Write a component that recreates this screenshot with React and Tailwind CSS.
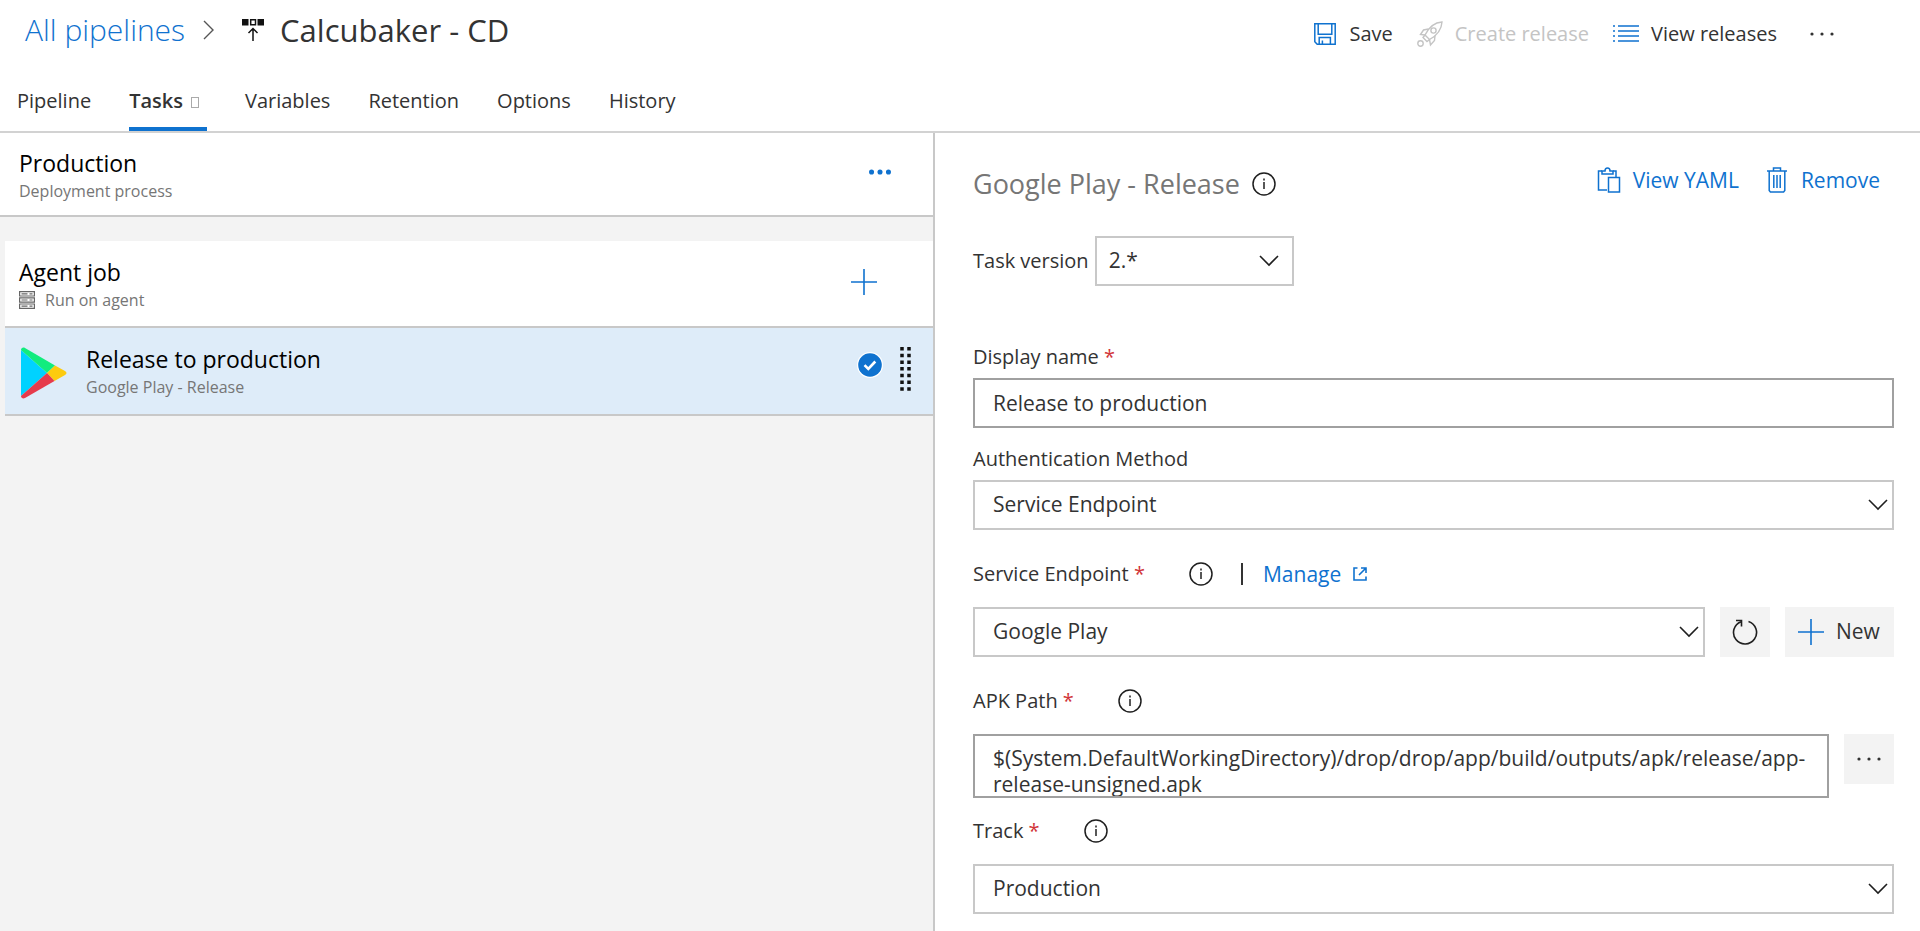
import React, { useState } from "react";

const tabs = ["Pipeline", "Tasks", "Variables", "Retention", "Options", "History"];

function InfoIcon() {
  return (
    <svg className="size-6 shrink-0" viewBox="0 0 24 24" fill="none" stroke="#1f1f1f" strokeWidth="1.5">
      <circle cx="12" cy="12" r="11" />
      <path d="M12 10v7" />
      <path d="M12 6.6v1.8" />
    </svg>
  );
}

function SaveIcon() {
  return (
    <svg className="size-6" viewBox="0 0 24 24" fill="none" stroke="#0f72cf" strokeWidth="1.5">
      <path d="M1.8 1.8h20.400v20.400H4.200l-2.400-2.400z" />
      <path d="M5.200 1.800v10.400h13.600V1.800" />
      <path d="M6.200 22.200v-6.600h11.200v6.600M9.400 22.200v-3.600" />
    </svg>
  );
}

function RocketIcon() {
  return (
    <svg className="size-[26px]" viewBox="0 0 26 26" fill="none" stroke="#c4c4c4" strokeWidth="1.4">
      <path d="M25 1C17 1.500 12 6 8 14l4.500 4.500C20 14.500 24.500 9 25 1z" />
      <circle cx="16.5" cy="9.500" r="2.600" />
      <path d="M11.500 8L6.500 9 3.500 13.500l4.500.5" />
      <path d="M18 14.500l-.5 5-4 4.500-1-5.500" />
      <path d="M8 14l-2 2.500 4 4 2.500-2" />
      <circle cx="3.500" cy="22.500" r="2.700" />
    </svg>
  );
}

function ListIcon() {
  return (
    <svg className="h-5 w-[26px]" viewBox="0 0 26 20" fill="none" stroke="#0f72cf" strokeWidth="1.6">
      <path d="M5 2h21M5 7h21M5 12h21M5 17h21" />
      <path d="M0 2h2M0 7h2M0 12h2M0 17h2" />
    </svg>
  );
}

function Dots({ className, r }) {
  return (
    <svg className={className} viewBox="0 0 26 8" fill="currentColor">
      <circle cx="3" cy="4" r={r} />
      <circle cx="13" cy="4" r={r} />
      <circle cx="23" cy="4" r={r} />
    </svg>
  );
}

function PlusIcon() {
  return (
    <svg className="size-[26px]" viewBox="0 0 26 26" fill="none" stroke="#0f72cf" strokeWidth="1.6">
      <path d="M13 0v26M0 13h26" />
    </svg>
  );
}

function PlayLogo() {
  return (
    <svg className="mt-1 h-[52px] w-12" viewBox="0 0 48 52">
      <path d="M1 3v46L27 26z" fill="#00d2ff" />
      <path d="M1 3c0-2 2-3 4-2l30 17.500L27 26z" fill="#12ec7e" />
      <path d="M35 18.500L45 24c2 1 2 3 0 4l-10.500 6L27 26z" fill="#fdcb0f" />
      <path d="M27 26l7.500 8L5 51c-2 1-4 0-4-2z" fill="#e63b4c" />
    </svg>
  );
}

function Label({ htmlFor, required, children }) {
  return (
    <label htmlFor={htmlFor} className="text-xl leading-7">
      {children}
      {required && <span className="text-[#d13438]"> *</span>}
    </label>
  );
}

function SelectBox({ id, options, className = "pl-[18px]", iconClassName = "right-[6px]" }) {
  return (
    <div className="relative grow">
      <select
        id={id}
        className={`h-[50px] w-full appearance-none border-2 border-[#c8c8c8] bg-white text-[21px] outline-none ${className}`}
      >
        {options.map((o) => (
          <option key={o}>{o}</option>
        ))}
      </select>
      <svg
        className={`pointer-events-none absolute top-[19px] h-3 w-5 ${iconClassName}`}
        viewBox="0 0 20 12"
        fill="none"
        stroke="#1f1f1f"
        strokeWidth="1.6"
      >
        <path d="M1 1l9 9 9-9" />
      </svg>
    </div>
  );
}

export default function App() {
  const [active, setActive] = useState("Tasks");
  const [name, setName] = useState("Release to production");
  const [apk, setApk] = useState(
    "$(System.DefaultWorkingDirectory)/drop/drop/app/build/outputs/apk/release/app-release-unsigned.apk"
  );

  return (
    <div className="flex min-h-screen flex-col bg-white font-['Open_Sans',sans-serif] text-[#333]">
      <header className="border-b-2 border-[#d2d2d2]">
        <div className="flex h-[60px] items-center justify-between pr-[85px] pl-[25px]">
          <div className="flex items-center leading-10">
            <a href="#" className="text-[30px] font-light text-[#0f72cf]">
              All pipelines
            </a>
            <svg className="mr-7 ml-[18px] h-5 w-[11px]" viewBox="0 0 11 20" fill="none" stroke="#555" strokeWidth="1.4">
              <path d="M1 1l9 9-9 9" />
            </svg>
            <svg className="mr-4 size-[22px]" viewBox="0 0 22 22" fill="none" stroke="#111" strokeWidth="1.5">
              <path d="M0 0h6.500v6.500H0zM15.500 0H22v6.500h-6.500z" fill="#111" stroke="none" />
              <path d="M8.700.8h4.800v5H8.700z" />
              <path d="M11 22V9.500M6.500 14L11 9.500l4.500 4.500" />
            </svg>
            <h1 className="text-[31px]">Calcubaker - CD</h1>
          </div>
          <div className="flex items-center pt-2 text-xl leading-7">
            <button className="flex items-center gap-3">
              <SaveIcon />
              Save
            </button>
            <button disabled className="ml-6 flex items-center gap-3 text-[#c4c4c4]">
              <RocketIcon />
              Create release
            </button>
            <button className="ml-6 flex items-center gap-3">
              <ListIcon />
              View releases
            </button>
            <button aria-label="More" className="ml-8">
              <Dots className="h-2 w-[26px]" r="1.6" />
            </button>
          </div>
        </div>
        <nav className="flex h-[71px] gap-[38px] pt-[10px] pl-[17px] text-xl">
          {tabs.map((t) => (
            <button
              key={t}
              onClick={() => setActive(t)}
              className={
                t === active
                  ? "flex items-center gap-2 border-t-4 border-b-4 border-t-transparent border-b-[#0f72cf] pr-2 font-semibold"
                  : "flex items-center"
              }
            >
              {t}
              {t === "Tasks" && <span className="mt-1 h-[11px] w-2 border border-[#aaa]" />}
            </button>
          ))}
        </nav>
      </header>

      <main className="flex grow">
        <section className="w-[935px] shrink-0 border-r-2 border-[#c8c8c8] bg-[#f3f3f3] text-black">
          <div className="flex h-[84px] items-center justify-between border-b-2 border-[#c8c8c8] bg-white pr-[42px] pl-[19px]">
            <div className="pt-1">
              <h2 className="text-[23px] leading-7">Production</h2>
              <p className="mt-[2px] text-base leading-6 text-[#767676]">Deployment process</p>
            </div>
            <button aria-label="More" className="mb-1 text-[#0f72cf]">
              <Dots className="h-2 w-[22px]" r="3" />
            </button>
          </div>

          <div className="mt-6 ml-[5px]">
            <div className="flex h-[87px] items-center justify-between border-b-2 border-[#c8c8c8] bg-white pr-[56px] pl-[14px]">
              <div className="pt-[2px]">
                <h2 className="text-[23px] leading-7">Agent job</h2>
                <p className="mt-[2px] flex items-center gap-[10px] text-base leading-6 text-[#767676]">
                  <svg className="h-[18px] w-4" viewBox="0 0 16 18" fill="none" stroke="#666" strokeWidth="1.2">
                    <path d="M.6.6h14.800v4.400H.6zM.6 6.800h14.800v4.400H.6zM.6 13h14.800v4.400H.6z" />
                    <path d="M2.500 2.800h6M10.500 2.800h3M2.500 9h6M10.500 9h3M2.500 15.200h6M10.500 15.200h3" />
                  </svg>
                  Run on agent
                </p>
              </div>
              <button aria-label="Add a task" className="mb-1">
                <PlusIcon />
              </button>
            </div>

            <div className="flex h-[88px] items-center border-b-2 border-[#c8c8c8] bg-[#deecf9] pr-[22px] pl-[15px]">
              <PlayLogo />
              <div className="ml-[18px] grow pt-[2px]">
                <h2 className="text-[23px] leading-7">Release to production</h2>
                <p className="mt-[2px] text-base leading-6 text-[#767676]">Google Play - Release</p>
              </div>
              <svg className="mr-[17px] mb-3 size-[26px]" viewBox="0 0 26 26">
                <circle cx="13" cy="13" r="13" fill="#fff" />
                <circle cx="13" cy="13" r="11.800" fill="#0f72cf" />
                <path d="M7.500 13.200l3.800 3.800 7-7.500" fill="none" stroke="#fff" strokeWidth="2.600" />
              </svg>
              <svg className="mb-1 h-[46px] w-[11px]" viewBox="0 0 11 46" fill="none" stroke="#111" strokeWidth="3.5">
                <path d="M2 1v45M9 1v45" strokeDasharray="3.500 3.200" />
              </svg>
            </div>
          </div>
        </section>

        <section className="min-w-0 grow pt-[33px] pr-[26px] pl-[38px]">
          <div className="flex h-9 items-center justify-between">
            <h2 className="flex items-center gap-3 text-[27px] leading-9 text-[#767676]">
              Google Play - Release
              <InfoIcon />
            </h2>
            <div className="mb-2 flex items-center gap-7 pr-[14px] text-[21px] leading-7 text-[#0f72cf]">
              <button className="flex items-center gap-3">
                <svg className="h-[26px] w-6" viewBox="0 0 24 26" fill="none" stroke="#0f72cf" strokeWidth="1.5">
                  <path d="M10 23H1.500V4H5M16 4h3v6" />
                  <path d="M5 4h3c0-4 5-4 5 0h3v3H5z" />
                  <path d="M11.500 10.500H22.500V25h-11z" />
                </svg>
                View YAML
              </button>
              <button className="flex items-center gap-[14px]">
                <svg className="h-[26px] w-5" viewBox="0 0 20 26" fill="none" stroke="#0f72cf" strokeWidth="1.5">
                  <path d="M0 4h20M6.500 4V1h7v3M2.200 4v19.500l1.200 1.500h13.200l1.200-1.500V4" />
                  <path d="M6.800 8v13M10 8v13M13.200 8v13" />
                </svg>
                Remove
              </button>
            </div>
          </div>

          <div className="mt-[34px] flex items-center gap-[6px]">
            <Label htmlFor="version">Task version</Label>
            <div className="flex w-[199px]">
              <SelectBox id="version" options={["2.*", "1.*"]} className="pl-3" iconClassName="right-[15px]" />
            </div>
          </div>

          <div className="mt-14 flex h-[30px] items-center">
            <Label htmlFor="name" required>Display name</Label>
          </div>
          <input
            id="name"
            value={name}
            onChange={(e) => setName(e.target.value)}
            className="mt-[6px] block h-[50px] w-full border-2 border-[#a0a0a0] px-[18px] text-[21px] outline-none"
          />

          <div className="mt-4 flex h-[30px] items-center">
            <Label htmlFor="auth">Authentication Method</Label>
          </div>
          <div className="mt-[6px] flex">
            <SelectBox id="auth" options={["Service Endpoint", "JSON Auth File"]} />
          </div>

          <div className="mt-[29px] flex h-[30px] items-center">
            <Label htmlFor="endpoint" required>Service Endpoint</Label>
            <span className="ml-11 flex items-center">
              <InfoIcon />
              <span className="mr-5 ml-7 h-[22px] w-[2px] bg-[#333]" />
            </span>
            <a href="#" className="flex items-center gap-3 text-[21px] leading-7 text-[#0f72cf]">
              Manage
              <svg className="size-[14px]" viewBox="0 0 14 14" fill="none" stroke="#0f72cf" strokeWidth="1.6">
                <path d="M4.500 1H1v12h12V9.500M8 1h5v5M13 1L6 8" />
              </svg>
            </a>
          </div>
          <div className="mt-[18px] flex gap-[15px]">
            <SelectBox id="endpoint" options={["Google Play"]} />
            <button aria-label="Refresh" className="flex size-[50px] items-center justify-center bg-[#f3f3f3]">
              <svg className="size-[26px]" viewBox="0 0 26 26" fill="none" stroke="#1f1f1f" strokeWidth="1.6">
                <path d="M16.500 2.500A11.500 11.500 0 1 1 9 2.700" />
                <path d="M4 1.500h5.500v6" />
              </svg>
            </button>
            <button className="flex h-[50px] w-[109px] items-center gap-3 bg-[#f3f3f3] pl-[13px] text-[21px]">
              <PlusIcon />
              New
            </button>
          </div>

          <div className="mt-[29px] flex h-[30px] items-center">
            <Label htmlFor="apk" required>APK Path</Label>
            <span className="ml-11">
              <InfoIcon />
            </span>
          </div>
          <div className="mt-[18px] flex items-start gap-[15px]">
            <textarea
              id="apk"
              value={apk}
              onChange={(e) => setApk(e.target.value)}
              className="block h-16 grow resize-none overflow-hidden border-2 border-[#a0a0a0] px-[18px] pt-[9px] text-[21px] leading-[26px] outline-none"
            />
            <button aria-label="Browse" className="flex size-[50px] items-center justify-center bg-[#f3f3f3]">
              <Dots className="h-2 w-[26px]" r="1.6" />
            </button>
          </div>

          <div className="mt-[18px] flex h-[30px] items-center">
            <Label htmlFor="track" required>Track</Label>
            <span className="ml-11">
              <InfoIcon />
            </span>
          </div>
          <div className="mt-[18px] flex">
            <SelectBox id="track" options={["Production", "Beta", "Alpha", "Internal"]} />
          </div>
        </section>
      </main>
    </div>
  );
}
